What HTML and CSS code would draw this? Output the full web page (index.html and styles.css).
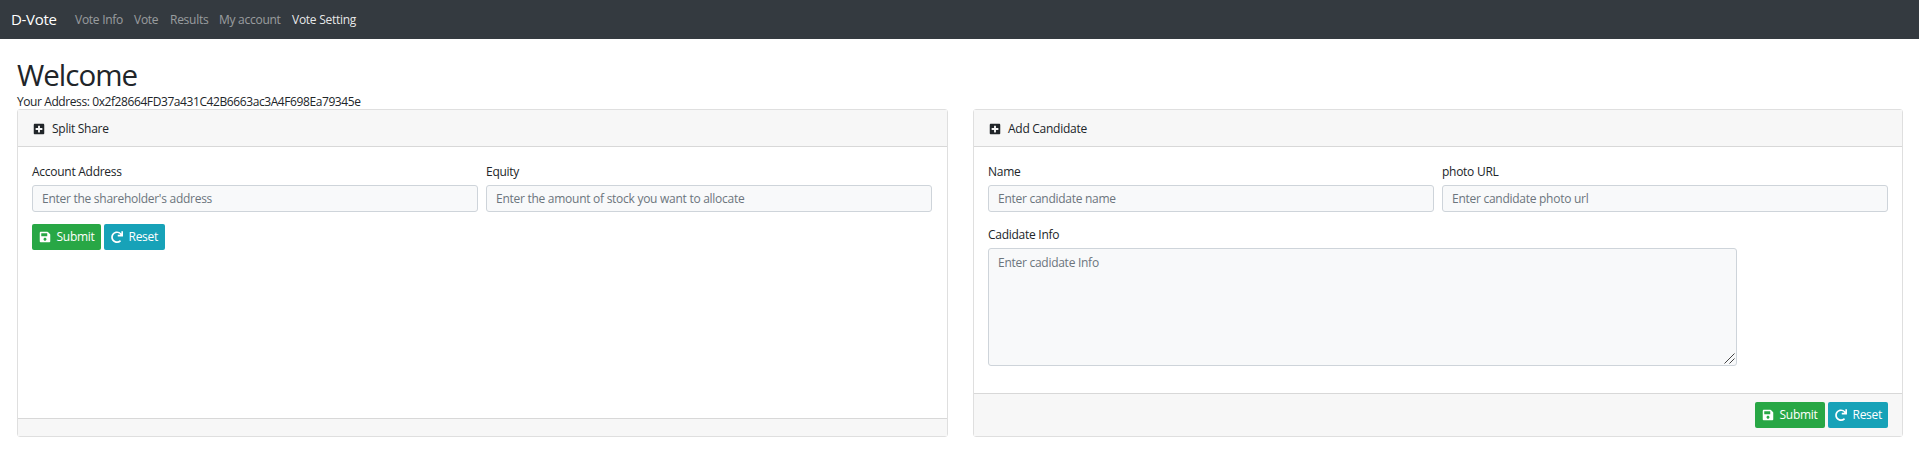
FILE: index.html
```html
<!DOCTYPE html>
<html lang="en">
<head>
<meta charset="utf-8">
<title>D-Vote</title>
<link rel="stylesheet" href="styles.css">
</head>
<body>
<svg class="sprite" aria-hidden="true">
  <symbol id="plus" viewBox="0 0 448 512"><path d="M400 32H48C21.500 32 0 53.500 0 80v352c0 26.500 21.500 48 48 48h352c26.500 0 48-21.500 48-48V80c0-26.500-21.500-48-48-48zm-32 252c0 6.600-5.400 12-12 12h-92v92c0 6.600-5.400 12-12 12h-56c-6.600 0-12-5.400-12-12v-92H92c-6.600 0-12-5.400-12-12v-56c0-6.600 5.400-12 12-12h92v-92c0-6.600 5.400-12 12-12h56c6.600 0 12 5.400 12 12v92h92c6.600 0 12 5.400 12 12v56z"/></symbol>
  <symbol id="save" viewBox="0 0 448 512"><path d="M433.941 129.941l-83.882-83.882A48 48 0 0 0 316.118 32H48C21.490 32 0 53.490 0 80v352c0 26.510 21.490 48 48 48h352c26.510 0 48-21.490 48-48V163.882a48 48 0 0 0-14.059-33.941zM224 416c-35.346 0-64-28.654-64-64 0-35.346 28.654-64 64-64s64 28.654 64 64c0 35.346-28.654 64-64 64zm96-304.520V212c0 6.627-5.373 12-12 12H76c-6.627 0-12-5.373-12-12V108c0-6.627 5.373-12 12-12h228.520c3.183 0 6.235 1.264 8.485 3.515l3.480 3.480A11.996 11.996 0 0 1 320 111.480z"/></symbol>
  <symbol id="redo" viewBox="0 0 512 512"><path d="M500 8h-47.400c-6.800 0-12.300 5.600-12 12.400l4 82.800A247.400 247.400 0 0 0 256 16C119 16 8 127 8 264.200 8 401.300 119 512 256.100 512a247 247 0 0 0 166-63.900c5.100-4.600 5.300-12.600.4-17.400l-34-34c-4.500-4.500-11.700-4.700-16.400-.5A176 176 0 1 1 402 164.700l-101.500-4.900c-6.800-.3-12.500 5.100-12.500 12V219c0 6.600 5.400 12 12 12h200c6.600 0 12-5.400 12-12V20c0-6.600-5.400-12-12-12z"/></symbol>
</svg>
<nav class="navbar">
  <a class="brand">D-Vote</a>
  <a class="nav-link l1">Vote Info</a>
  <a class="nav-link l2">Vote</a>
  <a class="nav-link l3">Results</a>
  <a class="nav-link l4">My account</a>
  <a class="nav-link l5 active">Vote Setting</a>
</nav>
<main class="page">
  <h1 class="title">Welcome</h1>
  <div class="address">Your Address: 0x2f28664FD37a431C42B6663ac3A4F698Ea79345e</div>
  <div class="cards">
    <section class="card">
      <header class="card-header"><svg class="icon"><use href="#plus"/></svg><span>Split Share</span></header>
      <div class="card-body">
        <div class="row">
          <div class="field"><label class="label">Account Address</label><input class="control" placeholder="Enter the shareholder's address"></div>
          <div class="field"><label class="label">Equity</label><input class="control" placeholder="Enter the amount of stock you want to allocate"></div>
        </div>
        <div class="buttons">
          <button class="btn submit"><svg class="icon"><use href="#save"/></svg><span>Submit</span></button>
          <button class="btn reset"><svg class="icon"><use href="#redo"/></svg><span>Reset</span></button>
        </div>
      </div>
      <footer class="card-footer"></footer>
    </section>
    <section class="card">
      <header class="card-header"><svg class="icon"><use href="#plus"/></svg><span>Add Candidate</span></header>
      <div class="card-body">
        <div class="row">
          <div class="field"><label class="label">Name</label><input class="control" placeholder="Enter candidate name"></div>
          <div class="field"><label class="label">photo URL</label><input class="control" placeholder="Enter candidate photo url"></div>
        </div>
        <label class="label">Cadidate Info</label>
        <div class="area-wrap">
          <textarea class="control area" placeholder="Enter cadidate Info"></textarea>
          <svg class="grip" viewBox="0 0 11 11"><path d="M0.500 10.500l10-10M5.500 10.500l5-5"/></svg>
        </div>
      </div>
      <footer class="card-footer actions">
        <div class="buttons">
          <button class="btn submit"><svg class="icon"><use href="#save"/></svg><span>Submit</span></button>
          <button class="btn reset"><svg class="icon"><use href="#redo"/></svg><span>Reset</span></button>
        </div>
      </footer>
    </section>
  </div>
</main>
</body>
</html>
```
FILE: styles.css
```css
* { box-sizing: border-box; }
body {
  margin: 0;
  background: #fff;
  color: #212529;
  font: 12px/18px "Open Sans", "Noto Sans", sans-serif;
  letter-spacing: -0.27px;
}
.sprite { display: none; }
.navbar {
  display: flex;
  align-items: center;
  height: 39px;
  padding: 0 11px 2px;
  background: #343a40;
}
.brand { width: 58px; color: #fff; font-size: 15px; letter-spacing: -0.3px; }
.nav-link { padding: 3px 6px 0; color: rgba(255, 255, 255, .5); white-space: nowrap; }
.l1 { width: 59px; }
.l2 { width: 36px; }
.l3 { width: 49px; }
.l4 { width: 73px; }
.active { color: rgba(255, 255, 255, .9); }
.page { padding: 17px 16px 0 17px; }
.title {
  margin: 0;
  height: 37px;
  font-size: 29.5px;
  font-weight: 400;
  line-height: 37px;
  letter-spacing: -1px;
}
.address { height: 16px; line-height: 17px; letter-spacing: -0.41px; }
.cards { display: grid; grid-template-columns: 930.5px 930px; gap: 25.5px; }
.card {
  display: flex;
  flex-direction: column;
  height: 328px;
  border: 1px solid rgba(0, 0, 0, .125);
  border-radius: 3px;
}
.card-header {
  display: flex;
  align-items: center;
  height: 37px;
  padding: 2px 0 0 15px;
  background: #f7f7f7;
  border-bottom: 1px solid rgba(0, 0, 0, .125);
}
.card-body { flex: 1; padding: 14px 14px 0; }
.card-footer { height: 18px; background: #f7f7f7; border-top: 1px solid rgba(0, 0, 0, .125); }
.card-footer.actions { display: flex; justify-content: flex-end; height: 43px; padding: 8px 14px 0; }
.icon { flex: none; width: 12px; height: 12px; fill: currentColor; }
.card-header .icon { margin-right: 7px; }
.row { display: grid; grid-template-columns: 446px 446px; gap: 8px; margin-bottom: 12px; }
.label { display: block; height: 24px; line-height: 21px; }
.control {
  display: block;
  width: 100%;
  height: 27px;
  padding: 3px 9px;
  background: #f8f9fa;
  border: 1px solid #ced4da;
  border-radius: 3px;
  font: inherit;
  letter-spacing: inherit;
}
.control::placeholder { color: #6c757d; opacity: 1; }
.area-wrap { position: relative; width: 749px; }
.area { height: 118px; padding-top: 5px; resize: none; }
.grip {
  position: absolute;
  right: 2px;
  bottom: 2px;
  width: 11px;
  height: 11px;
  fill: none;
  stroke: #444;
}
.buttons { display: flex; gap: 3px; }
.btn {
  display: flex;
  align-items: center;
  height: 26px;
  padding: 0 6.500px;
  border: 0;
  border-radius: 2px;
  color: #fff;
  font: inherit;
  letter-spacing: inherit;
}
.btn .icon { margin-right: 6px; }
.submit { width: 69px; background: #28a745; }
.reset { width: 61px; background: #17a2b8; }
.actions .submit { width: 70px; }
.actions .reset { width: 60px; }
```
